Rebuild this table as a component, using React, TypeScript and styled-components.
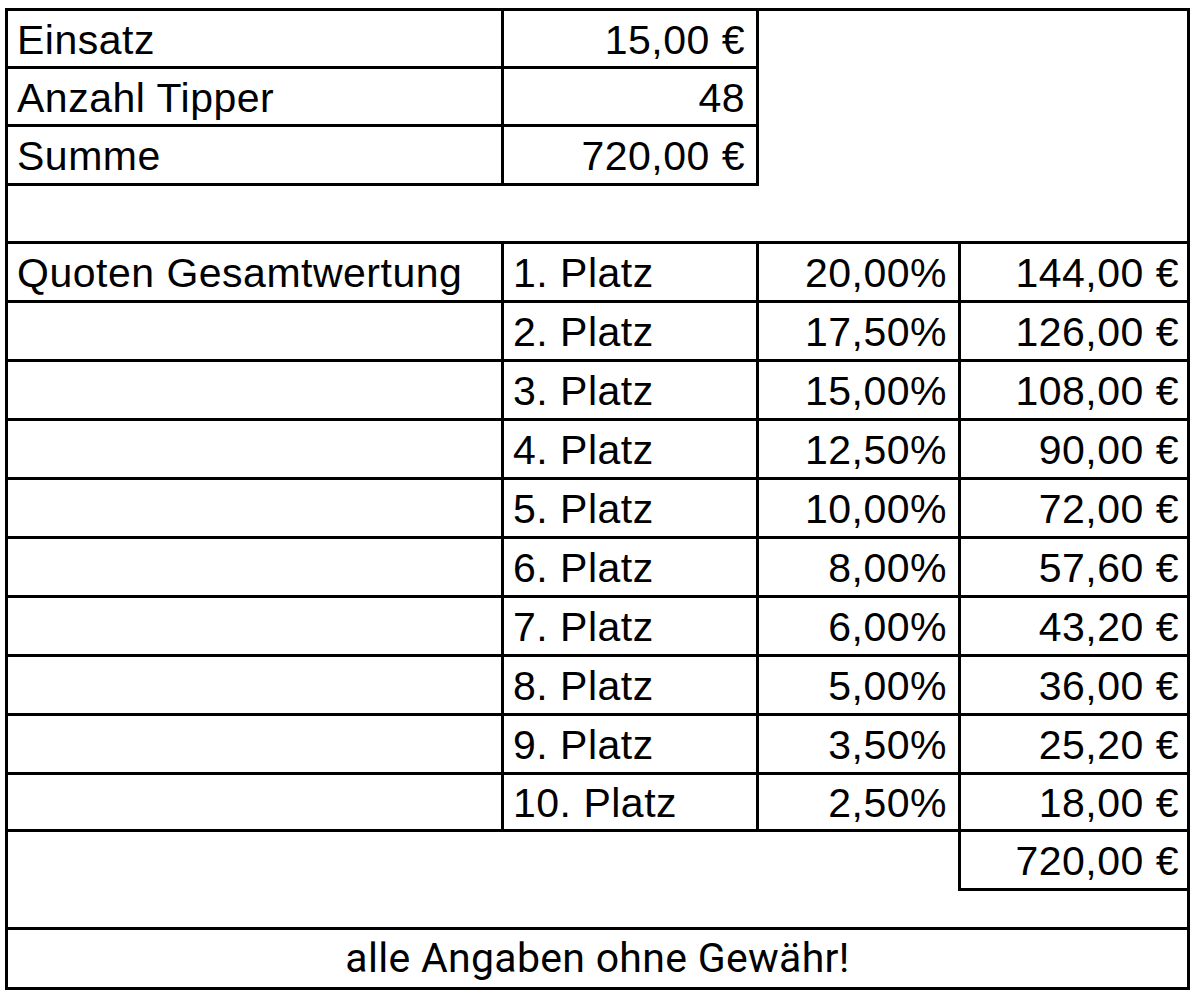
import React from "react";
import styled, { createGlobalStyle } from "styled-components";

const Global = createGlobalStyle`
  html, body { margin: 0; padding: 0; background: #ffffff; }
  body { font-family: "Liberation Sans", Arial, sans-serif; color: #000; }
`;

const Sheet = styled.table`
  margin: 8px 0 0 5px;
  border-collapse: collapse;
  table-layout: fixed;
  width: 1182px;
  border: 3px solid #000;
  font-family: "Liberation Sans", Arial, sans-serif;
  font-size: 41px;
  letter-spacing: 0.5px;
  color: #000;
`;

const Row = styled.tr<{ $h: number }>`
  height: ${(p) => p.$h}px;
`;

const Cell = styled.td<{ $align?: "left" | "right" | "center"; $b?: string; $pr?: number }>`
  padding: 0 ${(p) => p.$pr ?? 10}px 0 9px;
  text-align: ${(p) => p.$align ?? "left"};
  vertical-align: middle;
  line-height: 1;
  white-space: nowrap;
  padding-top: 3px;
  border-top: ${(p) => (p.$b?.includes("t") ? "3px solid #000" : "none")};
  border-right: ${(p) => (p.$b?.includes("r") ? "3px solid #000" : "none")};
  border-bottom: ${(p) => (p.$b?.includes("b") ? "3px solid #000" : "none")};
  border-left: ${(p) => (p.$b?.includes("l") ? "3px solid #000" : "none")};
`;

const Footer = styled.td`
  text-align: center;
  vertical-align: middle;
  font-family: Roboto, "Noto Sans", sans-serif;
  font-size: 41px;
  letter-spacing: 0.3px;
  line-height: 1;
  padding: 0;
  border-top: 3px solid #000;
`;

const top = [
  { label: "Einsatz", value: "15,00 €", h: 58 },
  { label: "Anzahl Tipper", value: "48", h: 58 },
  { label: "Summe", value: "720,00 €", h: 59 },
];

const places = [
  ["1. Platz", "20,00%", "144,00 €"],
  ["2. Platz", "17,50%", "126,00 €"],
  ["3. Platz", "15,00%", "108,00 €"],
  ["4. Platz", "12,50%", "90,00 €"],
  ["5. Platz", "10,00%", "72,00 €"],
  ["6. Platz", "8,00%", "57,60 €"],
  ["7. Platz", "6,00%", "43,20 €"],
  ["8. Platz", "5,00%", "36,00 €"],
  ["9. Platz", "3,50%", "25,20 €"],
  ["10. Platz", "2,50%", "18,00 €"],
];

export default function App() {
  return (
    <>
      <Global />
      <Sheet>
        <colgroup>
          <col style={{ width: 496 }} />
          <col style={{ width: 255 }} />
          <col style={{ width: 202 }} />
          <col style={{ width: 229 }} />
        </colgroup>
        <tbody>
          {top.map((r) => (
            <Row key={r.label} $h={r.h}>
              <Cell $b="trbl">{r.label}</Cell>
              <Cell $b="trbl" $align="right" $pr={11}>
                {r.value}
              </Cell>
              <Cell colSpan={2} />
            </Row>
          ))}
          <Row $h={58}>
            <Cell colSpan={4} $b="b" />
          </Row>
          {places.map((p, i) => (
            <Row key={p[0]} $h={i === 9 ? 57 : 59}>
              <Cell $b="trbl">{i === 0 ? "Quoten Gesamtwertung" : ""}</Cell>
              <Cell $b="trbl">{p[0]}</Cell>
              <Cell $b="trbl" $align="right" $pr={11}>
                {p[1]}
              </Cell>
              <Cell $b="trbl" $align="right" $pr={8}>
                {p[2]}
              </Cell>
            </Row>
          ))}
          <Row $h={59}>
            <Cell colSpan={3} />
            <Cell $b="trbl" $align="right" $pr={8}>
              720,00 €
            </Cell>
          </Row>
          <Row $h={39}>
            <Cell colSpan={4} $b="b" />
          </Row>
          <Row $h={60}>
            <Footer colSpan={4}>alle Angaben ohne Gewähr!</Footer>
          </Row>
        </tbody>
      </Sheet>
    </>
  );
}
